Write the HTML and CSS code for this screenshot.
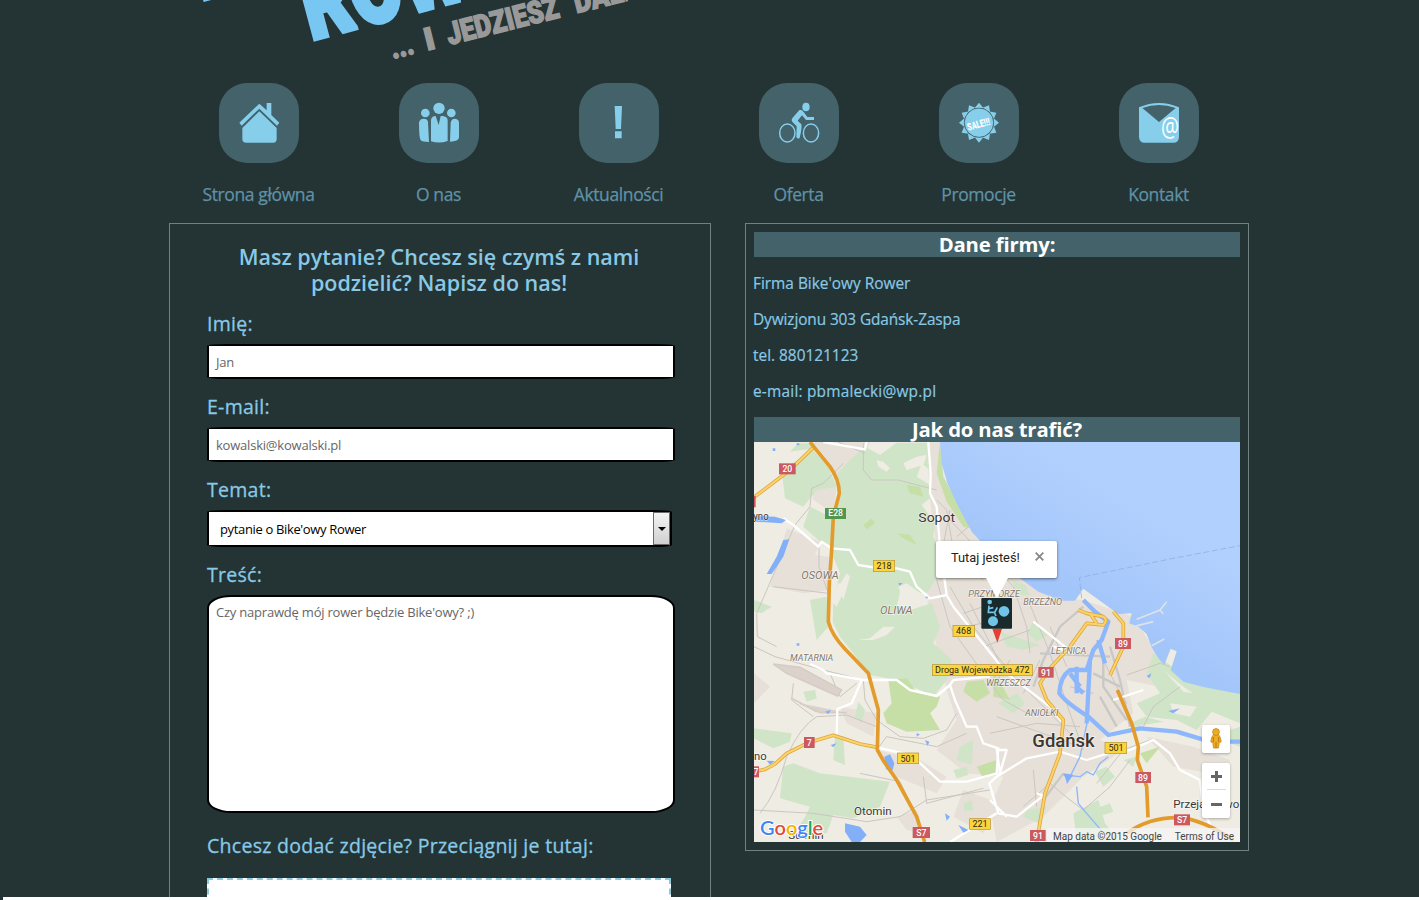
FILE: index.html
```html
<!DOCTYPE html>
<html lang="pl">
<head>
<meta charset="utf-8">
<title>Bike'owy Rower - Kontakt</title>
<link rel="stylesheet" href="styles.css">
</head>
<body>
<div class="page">
  <header class="banner">
    <svg class="logo" width="459" height="83" viewBox="169 0 459 83">
      <g transform="translate(201 0) rotate(-15)"><text class="logo-main" font-size="96" textLength="330" lengthAdjust="spacingAndGlyphs">BIKE'OWY</text></g>
      <g transform="translate(311 40) rotate(-15)"><text class="logo-main" font-size="100" textLength="256" lengthAdjust="spacingAndGlyphs">ROWER</text></g>
      <g transform="translate(393 59) rotate(-14)">
        <text class="logo-sub" textLength="23" lengthAdjust="spacingAndGlyphs">...</text>
        <text class="logo-sub" x="35" textLength="10" lengthAdjust="spacingAndGlyphs">I</text>
        <text class="logo-sub" x="58" textLength="115" lengthAdjust="spacingAndGlyphs">JEDZIESZ</text>
        <text class="logo-sub" x="189" textLength="80" lengthAdjust="spacingAndGlyphs">DALEJ</text>
      </g>
    </svg>
  </header>
  <nav class="menu">
    <a class="item"><svg class="tile" viewBox="87 39 240 240"><path d="M148 158L208 101L230 121V99H244V135L268 158L261 167L208 116L155 167Z"/><path d="M208 124L260 174V207Q260 218 249 218H169Q157 218 157 207V174Z"/></svg><span>Strona główna</span></a>
    <a class="item"><svg class="tile" viewBox="627 39 240 240"><circle cx="747" cy="115" r="17"/><circle cx="706" cy="129" r="13"/><circle cx="784" cy="129" r="13"/><path d="M723 150Q725 138 737 138L746 165L752 138H758Q772 139 773 151V213Q748 222 723 214ZM687 158Q689 146 701 146Q714 147 714 157L717 216Q697 216 692 211Q687 203 687 158ZM782 158Q784 146 795 146Q807 147 807 159V202Q806 215 780 215Z"/></svg><span>O nas</span></a>
    <a class="item"><svg class="tile" viewBox="87 39 240 240"><path d="M194 108H216L213 177H197ZM195 184H215V205H195Z"/></svg><span>Aktualności</span></a>
    <a class="item"><svg class="tile" viewBox="627 39 240 240"><ellipse class="ring" cx="712" cy="189" rx="23" ry="27"/><ellipse class="ring" cx="783" cy="189" rx="23" ry="27"/><ellipse cx="768" cy="111" rx="11" ry="13"/><path d="M749 119Q757 119 761 126L772 141H792V150H768L756 136L743 152L754 163Q757 171 749 204Q744 208 739 202L740 169L728 157Q722 150 728 143Z"/></svg><span>Oferta</span></a>
    <a class="item"><svg class="tile" viewBox="87 39 240 240"><circle cx="207" cy="158" r="43"/><path d="M207 98L194 114H220ZM207 218L194 202H220Z"/><path d="M207 98L194 114H220ZM207 218L194 202H220Z" transform="rotate(30 207 158)"/><path d="M207 98L194 114H220ZM207 218L194 202H220Z" transform="rotate(60 207 158)"/><path d="M207 98L194 114H220ZM207 218L194 202H220Z" transform="rotate(90 207 158)"/><path d="M207 98L194 114H220ZM207 218L194 202H220Z" transform="rotate(120 207 158)"/><path d="M207 98L194 114H220ZM207 218L194 202H220Z" transform="rotate(150 207 158)"/><circle class="gap" cx="207" cy="158" r="44"/><g transform="translate(175 182) rotate(-15)"><text class="sale" textLength="69" lengthAdjust="spacingAndGlyphs">SALE!!!</text></g></svg><span>Promocje</span></a>
    <a class="item"><svg class="tile" viewBox="627 39 240 240"><path fill-rule="evenodd" d="M687 112Q747 86 807 112V200Q807 218 789 218H705Q687 218 687 200ZM697 114L747 156L797 114Q747 96 697 114Z"/><g transform="translate(753 202) scale(1 1.5)"><text class="at" textLength="54" lengthAdjust="spacingAndGlyphs">@</text></g></svg><span>Kontakt</span></a>
  </nav>
  <main class="columns">
    <form class="panel contact">
      <h2 class="lead">Masz pytanie? Chcesz się czymś z nami<br>podzielić? Napisz do nas!</h2>
      <label class="lbl">Imię:</label>
      <div class="field">Jan</div>
      <label class="lbl">E-mail:</label>
      <div class="field">kowalski@kowalski.pl</div>
      <label class="lbl">Temat:</label>
      <div class="select"><span>pytanie o Bike'owy Rower</span><i class="arrow"></i></div>
      <label class="lbl">Treść:</label>
      <div class="area">Czy naprawdę mój rower będzie Bike'owy? ;)</div>
      <label class="lbl photo">Chcesz dodać zdjęcie? Przeciągnij je tutaj:</label>
      <div class="drop"></div>
    </form>
    <section class="panel company">
      <h3 class="band">Dane firmy:</h3>
      <div class="facts"><p>Firma Bike'owy Rower</p><p class="street">Dywizjonu 303 Gdańsk-Zaspa</p><p>tel. 880121123</p><p class="mail">e-mail: pbmalecki@wp.pl</p></div>
      <h3 class="band">Jak do nas trafić?</h3>
      <div class="map">
        <svg class="mapart" width="486" height="400" viewBox="12 6 1458 1200">
          <defs>
            <linearGradient id="sea" gradientUnits="userSpaceOnUse" x1="940" y1="460" x2="1120" y2="170"><stop offset="0" stop-color="#a2c5fa"/><stop offset="1" stop-color="#b2d0fe"/></linearGradient>
          </defs>
          <rect x="12" y="6" width="1458" height="1200" fill="#efece3"/>
          <g class="city">
            <path d="M190 6H360L340 60L270 140L240 70ZM530 6H575L580 110L660 270L790 400L900 470L1000 480L1150 530L1220 640L1230 740L1130 720L1150 820L1050 900L1120 930L1000 1010L960 1050L880 1130L740 1206L720 1100L760 1010L650 1000L560 930L620 840L590 750L560 620L530 470L560 330L540 180Z"/>
            <path d="M110 265L235 315L240 450L160 460L60 440L80 370ZM380 930L510 960L590 1010L560 1060L440 1010ZM440 1130L500 1110L520 1180L470 1170ZM1190 890L1330 920L1440 960V1010L1270 980ZM270 800L380 820L370 890L290 850ZM640 1050L750 1090L700 1180L610 1130Z"/>
            <path d="M180 130L260 140L250 220L190 180ZM12 700L60 740L12 790Z"/>
          </g>
          <g class="forest">
            <path d="M345 20L390 45L440 8H530L540 90L515 70L500 110L540 135V175L515 195L555 250L550 290L570 330L556 420L530 460L450 455L440 500L480 510L545 490L570 560L550 610L605 660L590 720L550 770L510 750L440 720L360 705L310 640L270 590L248 545L250 480L270 400L250 350L205 300L160 260L180 200L240 230L275 160L255 110L290 70Z"/>
            <path d="M95 90L190 30L235 80L260 140L200 150L160 200L105 175ZM12 865L125 880L120 905L70 925L12 895ZM130 970L210 1000L420 1025L390 1100L310 1135L250 1125L230 1180H140L180 1100L90 1075L100 980ZM145 10H200L190 25L120 35ZM180 480L230 470L235 560L200 600ZM255 885L280 890L285 975L250 960ZM12 480L65 500L35 520L12 515ZM325 785L345 810L335 850L315 830ZM125 1190L170 1125L215 1190Z"/>
            <path d="M785 420L825 435L840 465L800 465ZM850 545L900 580L860 605L830 580ZM1210 640L1310 710L1470 760V850L1385 815L1340 870L1280 840L1190 830L1160 790L1230 760L1190 700ZM1150 845L1185 830L1240 845L1150 860ZM750 575L870 615L820 630L770 620ZM745 790L800 760L825 790L790 820ZM970 1120L1045 1080L1065 1150L1110 1206H980ZM830 1110L890 1100L865 1150L820 1130ZM1035 995L1070 980L1095 1010L1060 1040ZM1120 960L1160 950L1150 980ZM630 920L670 900L665 975L620 960ZM1440 870L1470 860V920L1440 910ZM1040 1105L1080 1090L1090 1115L1060 1125ZM160 755L195 750L200 775L170 785ZM610 990L650 980L655 1005L620 1015ZM640 1090L665 1080L670 1110L645 1115Z"/>
          </g>
          <g class="park"><path d="M415 720L470 715L500 755L570 770L560 800L540 820L570 870L470 875L410 850L400 820L425 790ZM650 725L700 720L720 760L680 785L640 755ZM680 980L740 960L745 995L700 1015ZM340 255L365 235L375 250L350 268ZM440 280L480 285L500 315L460 295ZM470 135L510 140L520 170L480 160ZM730 700L755 735L780 780L730 770ZM570 6L580 110L665 265L640 260L590 185L560 100ZM1170 940L1230 920L1190 970Z"/></g>
          <g class="clear"><path d="M380 60L400 65L420 85L410 95L385 80ZM460 70L500 50L530 45L520 75L470 90ZM265 430L290 435L260 500L240 480ZM445 440L470 430L540 480L500 490L455 470ZM325 600L360 595L400 560L435 560L410 585L370 600ZM210 305L250 330L235 350L195 345ZM265 440L290 400L300 410L280 480ZM1240 690L1300 740L1330 760L1300 755ZM1260 790L1340 800L1320 830L1270 820Z"/></g>
          <path fill="url(#sea)" d="M570 6L575 70L592 130L625 200L665 275L735 350L810 415L865 455L935 482L975 482L1000 446L1060 490L1105 522L1145 520L1138 550L1165 560L1190 582L1205 622L1225 655L1243 675L1262 626L1280 634L1262 690L1300 725L1360 741L1470 762V6Z"/>
          <path class="pier" d="M1160 538L1230 510L1250 485M1230 510L1240 522M1150 560L1210 545M1205 617L1243 597"/>
          <path class="ferry" d="M995 475L988 413L1100 390L1270 355L1470 317"/>
          <g class="rail">
            <path d="M340 10V90L365 120L445 120L560 150M265 6L345 40M280 70L220 130L185 145L180 200L135 255L20 520L22 590L80 620M207 315V380L235 460L70 440M12 620L75 650L220 690L340 720L345 780L380 840L450 890L520 895L590 870L620 820M30 1120Q80 1060 110 950Q150 860 200 830L290 825L380 860M130 730L125 780L190 830M380 930L410 890L560 920L650 880M330 1000L450 1025L500 1130M520 1010L530 1090L700 1045M12 1110L190 1120L350 1145L450 1130L530 1080L720 1050M560 330L600 400L690 380M600 210L560 420L600 560L700 700L760 780L850 830M600 240L790 440L830 560L840 640M620 290L680 240M590 330L700 420M560 180L590 210L610 330M600 440L670 560L800 720L960 880M830 470L900 640L960 820L1000 930M720 880L860 850L990 860M740 830L850 870L990 920M820 1100L900 1030L960 1080L1000 1110L1080 1040L1140 960M1130 705L1230 670L1260 680M1180 860L1210 800L1290 740M1200 900L1120 930L1040 1030M650 560L780 530M640 520L760 480M700 620L840 570M660 490L760 690M870 660L820 760M850 990L860 1100M780 660L730 740M900 560L950 680M1060 660L1100 740L1130 790M240 700L270 770L320 730M960 740L1030 760"/>
          </g>
          <g class="gray-rail"><path d="M1000 500L930 560L880 660L850 740M1060 640L1060 740L1130 840M1080 620L1110 720L1140 860M1050 770L1100 860M880 1080L940 1000M1030 700L1110 740M870 640L1080 650"/></g>
          <g class="runway"><path d="M70 672L150 682L275 750L262 768L110 700ZM150 790L210 818H290M125 775L200 815"/></g>
          <g class="white-road">
            <path d="M100 235L130 255L205 320L215 305L245 325L300 330L325 375L390 385H440L480 395L500 440L540 475L590 465L610 500L690 600L770 700L900 800L940 850M535 6L542 100L540 160L560 200L570 320L590 465M220 6L345 28L350 6M180 672L220 690L230 700L340 720H440L480 750L560 768L600 735L610 720L720 710M335 720L305 790L262 807L260 885M600 735L615 780L650 860L680 860L700 910L745 925L740 1000L650 1025L570 1025L500 960L460 940L380 922M740 925L750 1000L718 1030L745 1120L800 1130L880 1067L860 1060M740 1120L600 1206M740 1010L830 955L930 935L1010 960L1090 935L1140 930L1210 900L1260 940L1290 990L1350 1020L1360 1110L1385 1165M740 930L770 930L750 1000M720 1080L770 1130M850 545L970 640L910 620M1090 780L1180 750"/>
          </g>
          <g class="river">
            <path stroke-width="13" d="M1000 480L1035 515L1075 545L1055 600L1030 630L1010 690H960Q930 710 928 760Q950 790 1015 830L1075 885L1170 865L1280 875L1380 905H1470M1045 600L1065 670M1020 660L1010 850M960 700L990 740M980 680V760M980 740L1000 760"/>
            <path stroke-width="4" d="M940 1005L990 1010L1010 995L1030 1005L1050 970L1075 950M1015 830L990 950L950 1030M980 1040L985 1090L1010 1120L1070 1190"/>
          </g>
          <g class="lake"><path d="M12 228L75 230L108 240L95 250L15 245ZM100 300L118 298L100 350L65 402H50L80 350ZM403 950L420 943L433 970L428 990L408 988ZM285 1150L330 1160L350 1185L330 1206H305L285 1175ZM50 962L75 963L60 974ZM525 900L538 905L533 918ZM625 1155L655 1170L640 1178ZM585 1120L600 1130L590 1142ZM225 815L243 810L235 822ZM242 915L260 910L250 922ZM445 428L458 430L448 437ZM525 470L535 470L530 476ZM1255 813L1290 805L1270 820ZM1190 708L1205 700L1198 715ZM940 1000L970 1004L952 1030ZM500 880L510 883L500 890ZM140 610h8v7h-8ZM68 25h8v8h-8ZM140 10h8v6h-8Z"/></g>
          <g class="yellow-case"><path d="M190 22L120 90L12 172M12 995L45 988L75 972L110 940L175 908L250 886L330 912L382 922M985 510L1010 520L1060 530Q1075 540 1060 555L1010 550L960 620L895 690L870 730L890 780L940 840L930 940L885 1060L860 1206M1020 520L1040 550M1090 515L1120 550V620L1080 706"/></g>
          <g class="yellow"><path d="M190 22L120 90L12 172M12 995L45 988L75 972L110 940L175 908L250 886L330 912L382 922M985 510L1010 520L1060 530Q1075 540 1060 555L1010 550L960 620L895 690L870 730L890 780L940 840L930 940L885 1060L860 1206M1020 520L1040 550M1090 515L1120 550V620L1080 706"/></g>
          <path class="orange" d="M180 6L240 80Q268 120 268 160L250 230L245 330L238 430L235 545Q245 585 285 627L355 700L385 810L382 930L400 962L440 1020L500 1130L524 1206M1102 750L1145 850L1165 920L1162 960L1190 1040L1194 1132M1130 1180Q1200 1130 1290 1133Q1360 1140 1450 1200"/>
          <g class="shields">
            <g class="red"><rect x="87" y="70" width="50" height="33"/><rect x="3" y="168" width="14" height="34"/><rect x="162" y="891" width="32" height="33"/><rect x="3" y="979" width="24" height="33"/><rect x="488" y="1161" width="52" height="33"/><rect x="865" y="681" width="46" height="32"/><rect x="1095" y="594" width="48" height="33"/><rect x="1156" y="996" width="47" height="33"/><rect x="1272" y="1123" width="48" height="33"/><rect x="840" y="1170" width="47" height="33"/></g>
            <rect x="225" y="204" width="63" height="33" fill="#55954e"/>
            <g class="amber"><rect x="370" y="361" width="64" height="34"/><rect x="609" y="556" width="65" height="34"/><rect x="547" y="674" width="300" height="33"/><rect x="442" y="939" width="64" height="32"/><rect x="659" y="1136" width="62" height="32"/><rect x="1065" y="907" width="65" height="34"/></g>
            <g class="sh-white"><text x="112" y="96">20</text><text x="257" y="229">E28</text><text x="178" y="918">7</text><text x="18" y="1005">7</text><text x="514" y="1187">S7</text><text x="888" y="707">91</text><text x="1119" y="620">89</text><text x="1179" y="1022">89</text><text x="1296" y="1149">S7</text><text x="864" y="1196">91</text></g>
            <g class="sh-dark"><text x="402" y="388">218</text><text x="641" y="582">468</text><text x="697" y="700" textLength="284" lengthAdjust="spacingAndGlyphs">Droga Wojewódzka 472</text><text x="474" y="965">501</text><text x="690" y="1161">221</text><text x="1098" y="933">501</text></g>
          </g>
          <g class="places">
            <text x="505" y="246" font-size="41" textLength="110" lengthAdjust="spacingAndGlyphs">Sopot</text><text x="10" y="239" font-size="33" textLength="46" lengthAdjust="spacingAndGlyphs">yno</text><text x="12" y="959" font-size="33" textLength="38" lengthAdjust="spacingAndGlyphs">no</text><text x="312" y="1124" font-size="35" textLength="113" lengthAdjust="spacingAndGlyphs">Otomin</text><text x="115" y="1198" font-size="33" textLength="106" lengthAdjust="spacingAndGlyphs">Sulmin</text><text x="1270" y="1105" font-size="35" textLength="198" lengthAdjust="spacingAndGlyphs">Przejazdowo</text><text class="gdansk" x="847" y="920" textLength="187" lengthAdjust="spacingAndGlyphs">Gdańsk</text>
          </g>
          <g class="districts">
            <text x="154" y="416" font-size="33" textLength="112" lengthAdjust="spacingAndGlyphs">OSOWA</text><text x="390" y="521" font-size="33" textLength="98" lengthAdjust="spacingAndGlyphs">OLIWA</text><text x="120" y="662" textLength="130" lengthAdjust="spacingAndGlyphs">MATARNIA</text><text x="655" y="471" textLength="155" lengthAdjust="spacingAndGlyphs">PRZYMORZE</text><text x="820" y="495" textLength="116" lengthAdjust="spacingAndGlyphs">BRZEŹNO</text><text x="903" y="642" textLength="106" lengthAdjust="spacingAndGlyphs">LETNICA</text><text x="708" y="737" textLength="134" lengthAdjust="spacingAndGlyphs">WRZESZCZ</text><text x="825" y="827" textLength="100" lengthAdjust="spacingAndGlyphs">ANIOŁKI</text>
          </g>
          <path fill="#e53f32" d="M727 566H756L742 608Z"/>
          <rect x="694" y="474" width="92" height="92" rx="3" fill="#192a2d"/>
          <g fill="#70c4e7"><circle cx="719" cy="486" r="7"/><circle cx="762" cy="514" r="16"/><circle cx="729" cy="544" r="15"/><path fill="none" stroke="#70c4e7" stroke-width="5" d="M717 497L715 517H733L738 528M716 506L730 503M733 519L742 502"/></g>
        </svg>
        <div class="bubble"><span>Tutaj jesteś!</span><svg width="9" height="9" viewBox="0 0 9 9"><path d="M.7.7L8.3 8.3M8.3.7L.7 8.3"/></svg></div>
        <div class="controls">
          <div class="peg"><svg width="14" height="22" viewBox="0 0 14 22"><path fill="#efac20" stroke="#bd8119" stroke-width=".7" d="M4.5 6.5Q2 9 1.8 14L3.8 14.5L4.5 20H9.5L10.2 14.5L12.2 14Q12 9 9.5 6.5Z"/><circle cx="7" cy="4" r="3.4" fill="#efac20" stroke="#bd8119" stroke-width=".7"/><path d="M7 14V20M4.4 9V14M9.6 9V14" stroke="#a87016" stroke-width=".8"/></svg></div>
          <div class="zoom"><b class="plus"></b><b class="minus"></b></div>
        </div>
        <div class="google"><span class="b">G</span><span class="r">o</span><span class="y">o</span><span class="b">g</span><span class="g">l</span><span class="r">e</span></div>
        <div class="credit"><span>Map data ©2015 Google</span><span>Terms of Use</span></div>
      </div>
    </section>
  </main>
</div>
<div class="strip"></div>
</body>
</html>
```
FILE: styles.css
```css
* { box-sizing: border-box; }
body { margin: 0; height: 900px; overflow: hidden; background: #243333; font-family: "Open Sans", "Noto Sans", sans-serif; color: #87c9e6; }
.page { height: 897px; overflow: hidden; padding-left: 169px; }
.strip { height: 3px; margin-left: 3px; background: #fff; }
.banner { height: 83px; }
.logo { display: block; }
.logo-main { font-family: Roboto, sans-serif; font-weight: 900; fill: #78c6f2; stroke: #78c6f2; stroke-width: 5px; }
.logo-sub { font-family: Roboto, sans-serif; font-weight: 900; font-size: 31px; fill: #999; stroke: #999; stroke-width: 1.5px; }
.menu { display: grid; grid-template-columns: repeat(6, 180px); height: 140px; }
.item { display: flex; flex-direction: column; align-items: center; gap: 18px; font-size: 17.5px; line-height: 26px; color: #5f92a7; letter-spacing: -.38px; -webkit-text-stroke: .25px #5f92a7; }
.item span { margin-left: -1px; }
.tile { width: 80px; height: 80px; border-radius: 28px; background: #43626a; fill: #87ceeb; }
.ring { fill: none; stroke: #87ceeb; stroke-width: 4.5px; }
.gap { fill: none; stroke: #43626a; stroke-width: 2px; }
.sale { font: 900 31px Roboto, sans-serif; fill: #fff; stroke: none; }
.tile text { -webkit-text-stroke: 0; letter-spacing: 0; }
.at { font: 56px "Open Sans", sans-serif; fill: #fff; }
.columns { display: flex; align-items: flex-start; gap: 34px; }
.panel { border: 1px solid #71817f; }
.contact { width: 542px; height: 760px; padding: 20px 39px 0 37px; }
.lead { margin: 0 0 15px; font-size: 21.5px; font-weight: 600; line-height: 26px; text-align: center; white-space: nowrap; }
.lbl { display: block; height: 26px; margin-bottom: 7px; font-size: 19.5px; letter-spacing: .28px; line-height: 26px; -webkit-text-stroke: .3px #87c9e6; white-space: nowrap; }
.photo { margin-bottom: 19px; }
.field, .area, .select { border: 2px solid #000; background: #fff; font-size: 13px; letter-spacing: -.21px; color: #666; }
.field { width: 468px; height: 35px; margin-bottom: 15px; padding: 0 7px; line-height: 32px; border-radius: 20px / 2px; }
.select { display: flex; justify-content: space-between; width: 465px; height: 37px; margin-bottom: 15px; padding-left: 11px; line-height: 34px; letter-spacing: -.35px; color: #000; border-radius: 20px / 2px; }
.arrow { display: flex; align-items: center; justify-content: center; width: 17px; height: 33px; border: 1px solid #6b6b6b; background: linear-gradient(#f3f3f3, #d0d0d0); }
.arrow::after { content: ""; border: 4px solid transparent; border-top-color: #000; border-bottom: 0; }
.area { width: 468px; height: 218px; margin-bottom: 20px; padding: 6px 7px; line-height: 18px; border-radius: 24px / 13px; }
.drop { width: 464px; height: 100px; border: 2px dashed #8cc9dd; background: #fff; }
.company { width: 504px; height: 628px; padding: 8px; }
.band { margin: 0; height: 25px; background: #43626a; color: #fff; font-size: 20.3px; font-weight: 700; line-height: 25px; letter-spacing: -.15px; text-align: center; }
.facts { height: 160px; padding-top: 9px; }
.facts p { margin: 0 0 0 -1px; font-size: 15.4px; line-height: 36px; -webkit-text-stroke: .2px #87c9e6; }
.facts .street { letter-spacing: -.1px; }
.facts .mail { letter-spacing: .22px; }
.map { position: relative; height: 400px; overflow: hidden; font-family: Roboto, sans-serif; }
.mapart { display: block; font-family: Roboto, sans-serif; }
.city { fill: #e6e0d8; }
.forest { fill: #d0e4c7; }
.park { fill: #c6dfa6; }
.clear { fill: #efece3; }
.pier { fill: none; stroke: #dce3e7; stroke-width: 5px; }
.ferry { fill: none; stroke: #86a9dd; stroke-width: 2px; stroke-dasharray: 18 8; }
.rail { fill: none; stroke: #cbc6c1; stroke-width: 3px; }
.gray-rail { fill: none; stroke: #c9c8c6; stroke-width: 7px; }
.runway { fill: #dad2cb; stroke: #d4ccc5; stroke-width: 5px; }
.white-road { fill: none; stroke: #fff; stroke-width: 7px; stroke-linejoin: round; }
.river { fill: none; stroke: #8db7fc; stroke-linejoin: round; }
.lake { fill: #82aff8; }
.yellow-case { fill: none; stroke: #dfa63e; stroke-width: 11px; stroke-linejoin: round; }
.yellow { fill: none; stroke: #fbd468; stroke-width: 6px; stroke-linejoin: round; }
.orange { fill: none; stroke: #e39b2c; stroke-width: 11px; stroke-linejoin: round; }
.red { fill: #cb5960; }
.amber { fill: #fbd53b; stroke: #b8902c; stroke-width: 2px; }
.sh-white { fill: #fff; font-size: 26px; font-weight: 500; text-anchor: middle; }
.sh-dark { fill: #30291c; font-size: 27px; font-weight: 400; text-anchor: middle; }
.places { fill: #3b3633; stroke: #fff; stroke-width: 4px; stroke-opacity: .6; paint-order: stroke; }
.gdansk { font-size: 57px; font-weight: 500; }
.districts { fill: #82776d; font-size: 28px; font-style: italic; stroke: #fff; stroke-width: 4px; stroke-opacity: .6; paint-order: stroke; }
.bubble { position: absolute; left: 182px; top: 99px; width: 121px; height: 37px; display: flex; gap: 15px; padding: 10px 13px 0 15px; background: #fff; border-radius: 2px; box-shadow: 0 1px 3px rgba(0,0,0,.5); color: #222; font-size: 12.8px; line-height: 14px; white-space: nowrap; }
.bubble::after { content: ""; position: absolute; left: 50px; top: 37px; border: 11px solid transparent; border-top: 20px solid #fff; border-bottom: 0; }
.bubble svg { flex: none; margin-top: 1px; stroke: #888; stroke-width: 1.8px; }
.controls { position: absolute; right: 10px; top: 283px; display: flex; flex-direction: column; gap: 10px; }
.peg, .zoom { width: 28px; background: #fff; border-radius: 2px; box-shadow: 0 1px 3px rgba(0,0,0,.3); }
.peg { height: 28px; padding: 3px 7px; }
.zoom { height: 55px; display: flex; flex-direction: column; align-items: center; }
.plus, .minus { position: relative; width: 19px; height: 27px; }
.plus { border-bottom: 1px solid #ddd; }
.plus::before, .minus::before { content: ""; position: absolute; left: 4px; top: 12px; width: 11px; height: 3px; background: #666; }
.minus::before { top: 13px; }
.plus::after { content: ""; position: absolute; left: 8px; top: 8px; width: 3px; height: 11px; background: #666; }
.google { position: absolute; left: 6px; top: 373px; font: 600 20px/24px Lato, sans-serif; -webkit-text-stroke: 2px #fff; paint-order: stroke; }
.b { color: #4285f4; } .r { color: #de4a3c; } .y { color: #f4b400; } .g { color: #27a35a; }
.credit { position: absolute; right: 0; bottom: 0; display: flex; justify-content: space-between; width: 193px; height: 14px; padding: 2px 6px 0 6px; background: rgba(245,245,245,.75); font-size: 10px; line-height: 14px; color: #444; white-space: nowrap; }
```
